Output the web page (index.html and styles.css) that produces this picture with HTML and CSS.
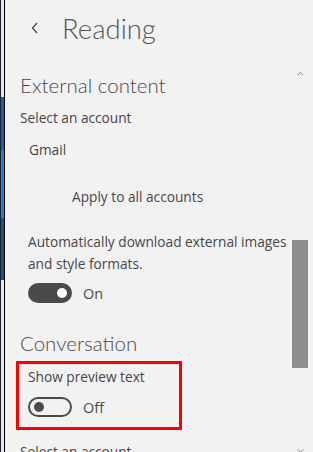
FILE: index.html
```html
<!DOCTYPE html>
<html>
<head>
<meta charset="utf-8">
<link rel="stylesheet" href="styles.css">
</head>
<body>
<div class="frame">
  <div class="edge"></div>
  <div class="main">
    <div class="title-row">
      <svg class="back" width="8" height="12" viewBox="0 0 8 12"><path d="M6 1 L1.5 6 L6 11" fill="none" stroke="#444" stroke-width="1.2"/></svg>
      <span class="title">Reading</span>
    </div>
    <div class="section-head">External content</div>
    <div class="label">Select an account</div>
    <div class="account">Gmail</div>
    <div class="apply">Apply to all accounts</div>
    <div class="desc">Automatically download external images and style formats.</div>
    <div class="toggle-row">
      <span class="toggle on"><span class="knob"></span></span>
      <span class="toggle-label">On</span>
    </div>
    <div class="section-head conv">Conversation</div>
    <div class="highlight">
      <div class="desc">Show preview text</div>
      <div class="toggle-row">
        <span class="toggle off"><span class="knob"></span></span>
        <span class="toggle-label">Off</span>
      </div>
    </div>
    <div class="label last">Select an account</div>
  </div>
  <div class="scroll">
    <svg class="arrow up" width="9" height="5" viewBox="0 0 9 5"><path d="M0.5 4.5 L4.5 0.5 L8.5 4.5" fill="none" stroke="#555" stroke-width="1"/></svg>
    <div class="thumb"></div>
    <svg class="arrow down" width="9" height="5" viewBox="0 0 9 5"><path d="M0.5 0.5 L4.5 4.5 L8.5 0.5" fill="none" stroke="#555" stroke-width="1"/></svg>
  </div>
</div>
</body>
</html>
```
FILE: styles.css
```css
html, body {
  margin: 0;
  padding: 0;
}
body {
  width: 313px;
  height: 452px;
  overflow: hidden;
  background: #f2f2f2;
  font-family: "Open Sans", "Noto Sans", sans-serif;
  color: #474747;
}
.frame {
  display: flex;
  height: 452px;
}
.edge {
  width: 3px;
  flex: none;
  border-left: 1px solid #1a2433;
  border-right: 1px solid #000;
  background: linear-gradient(to bottom,
    #e8e8e8 0px, #e8e8e8 97px,
    #1f5f9e 97px, #1f5f9e 150px,
    #2a7bc8 150px, #2a7bc8 218px,
    #1d4f80 218px, #1d4f80 280px,
    #e8e8e8 280px, #e8e8e8 100%);
}
.main {
  flex: 1;
  min-width: 0;
  padding-left: 15px;
  display: flex;
  flex-direction: column;
}
.title-row {
  height: 56px;
  display: flex;
  align-items: center;
  flex: none;
}
.back {
  margin-left: 11px;
  margin-right: 23px;
}
.title {
  font-family: Lato, "Open Sans", sans-serif;
  font-size: 27.5px;
  font-weight: 300;
  color: #555;
}
.section-head {
  font-family: Lato, "Open Sans", sans-serif;
  font-size: 20.5px;
  font-weight: 300;
  color: #4a4a4a;
  line-height: 28px;
  margin-top: 15px;
}
.section-head.conv {
  margin-top: 26px;
}
.label {
  font-size: 13.7px;
  line-height: 20px;
  margin-top: 9px;
}
.account {
  font-size: 13.7px;
  line-height: 20px;
  margin-top: 12px;
  padding-left: 9px;
}
.apply {
  font-size: 13.7px;
  line-height: 20px;
  margin-top: 27px;
  padding-left: 52px;
}
.desc {
  font-size: 13.7px;
  line-height: 22px;
  margin-top: 24px;
  padding-left: 8px;
}
.toggle-row {
  display: flex;
  align-items: center;
  padding-left: 8px;
  margin-top: 8px;
  height: 22px;
}
.toggle {
  width: 44px;
  height: 20px;
  box-sizing: border-box;
  border-radius: 10px;
  display: flex;
  align-items: center;
}
.toggle.on {
  background: #4a4a4a;
  justify-content: flex-end;
  padding-right: 5px;
}
.toggle.off {
  border: 2px solid #4a4a4a;
  padding-left: 4px;
}
.knob {
  width: 10px;
  height: 10px;
  border-radius: 50%;
}
.toggle.on .knob {
  background: #fff;
}
.toggle.off .knob {
  background: #4a4a4a;
}
.toggle-label {
  font-size: 14.5px;
  margin-left: 11px;
  color: #4a4a4a;
}
.highlight {
  margin-left: -4px;
  margin-top: 4px;
  width: 166px;
  height: 69px;
  box-sizing: border-box;
  border: 3px solid #ff0000;
  padding-left: 4px;
  flex: none;
}
.highlight .desc {
  margin-top: 2px;
  padding-left: 5px;
}
.highlight .toggle-row {
  padding-left: 5px;
  margin-top: 8px;
}
.label.last {
  margin-top: 12px;
}
.scroll {
  width: 23px;
  flex: none;
  display: flex;
  flex-direction: column;
  align-items: center;
}
.arrow.up {
  margin-top: 72px;
  margin-left: -2px;
}
.thumb {
  width: 16px;
  height: 128px;
  margin-top: 164px;
  margin-left: -4px;
  background: #8f8f8f;
  flex: none;
}
.arrow.down {
  margin-top: 81px;
  margin-left: -2px;
}
```
